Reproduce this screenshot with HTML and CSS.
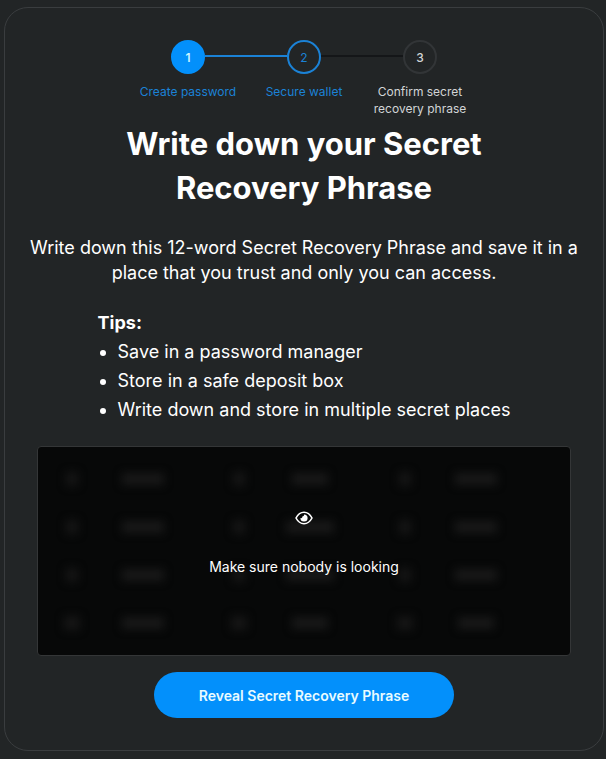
FILE: index.html
```html
<!DOCTYPE html>
<html lang="en">
<head>
    <meta charset="UTF-8">
    <meta name="viewport" content="width=device-width, initial-scale=1.0">
    <title>Secret Recovery Phrase</title>
    <link rel="stylesheet" href="styles.css">
</head>
<body>
    <main class="card">
        <ol class="steps">
            <li class="step done">
                <span class="step-number">1</span>
                <span class="step-label">Create password</span>
            </li>
            <li class="step active">
                <span class="step-number">2</span>
                <span class="step-label">Secure wallet</span>
            </li>
            <li class="step">
                <span class="step-number">3</span>
                <span class="step-label">Confirm secret recovery phrase</span>
            </li>
        </ol>

        <h1>Write down your Secret Recovery Phrase</h1>
        <p class="intro">Write down this 12-word Secret Recovery Phrase and save it in a place that you trust and only you can access.</p>

        <section class="tips">
            <h2>Tips:</h2>
            <ul>
                <li>Save in a password manager</li>
                <li>Store in a safe deposit box</li>
                <li>Write down and store in multiple secret places</li>
            </ul>
        </section>

        <div class="phrase">
            <div class="words" aria-hidden="true">
                <div class="word"><span></span><i></i></div>
                <div class="word"><span></span><i class="short"></i></div>
                <div class="word"><span></span><i></i></div>
                <div class="word"><span></span><i></i></div>
                <div class="word"><span></span><i class="long"></i></div>
                <div class="word"><span></span><i></i></div>
                <div class="word"><span></span><i></i></div>
                <div class="word"><span></span><i class="long"></i></div>
                <div class="word"><span></span><i></i></div>
                <div class="word"><span class="wide"></span><i></i></div>
                <div class="word"><span class="wide"></span><i class="short"></i></div>
                <div class="word"><span class="wide"></span><i class="short"></i></div>
            </div>
            <div class="cover">
                <svg width="18" height="14" viewBox="0 0 18 14" aria-hidden="true">
                    <path d="M1 7C3 3.200 5.700 1.300 9 1.300S15 3.200 17 7C15 10.800 12.300 12.700 9 12.700S3 10.800 1 7Z" fill="none" stroke="#fff" stroke-width="1.600" stroke-linejoin="round"/>
                    <path d="M9 3.400A3.600 3.600 0 1 1 5.400 7A1.500 1.500 0 0 0 7.500 5.300A1.600 1.600 0 0 0 9 3.400Z" fill="#fff"/>
                </svg>
                <p>Make sure nobody is looking</p>
            </div>
        </div>

        <button type="button" class="reveal">Reveal Secret Recovery Phrase</button>
    </main>
</body>
</html>
```
FILE: styles.css
```css
:root {
    --background-color: #222526;
    --primary-color: #0390fb;
    --active-color: #1b82d6;
    --border-color: #3a3d3f;
    --muted-color: #d2d5d7;
}

* {
    margin: 0;
    padding: 0;
    box-sizing: border-box;
}

body {
    font-family: "Inter", sans-serif;
    background-color: var(--background-color);
    color: white;
    padding: 7px 2px 8px 4px;
}

.card {
    display: flex;
    flex-direction: column;
    align-items: center;
    padding: 32px;
    border: 1px solid var(--border-color);
    border-radius: 24px;
}

.steps {
    display: grid;
    grid-template-columns: repeat(3, 116px);
    list-style: none;
    margin-bottom: 5px;
}

.step {
    display: flex;
    flex-direction: column;
    align-items: center;
    gap: 9px;
    position: relative;
    font-size: 12px;
    line-height: 17px;
    color: var(--muted-color);
    text-align: center;
}

/* line to the next step */
.step:not(:last-child)::after {
    content: "";
    position: absolute;
    top: 15px;
    left: calc(50% + 17px);
    width: calc(100% - 34px);
    height: 2px;
    background-color: #141618;
}

.step.done::after {
    background-color: var(--active-color);
}

.step-number {
    display: flex;
    justify-content: center;
    align-items: center;
    width: 34px;
    height: 34px;
    border: 2px solid #323537;
    border-radius: 50%;
    font-weight: 500;
}

.step-label {
    max-width: 100px;
}

.done,
.active {
    color: var(--active-color);
}

.active .step-number {
    border-color: var(--active-color);
    font-weight: 400;
}

.done .step-number {
    background-color: var(--primary-color);
    border-color: var(--primary-color);
    color: #c9f5ff;
    font-weight: 600;
}

h1 {
    max-width: 400px;
    font-size: 31px;
    line-height: 44px;
    font-weight: 700;
    text-align: center;
    margin-bottom: 25px;
}

.intro {
    font-size: 18px;
    line-height: 25px;
    text-align: center;
    margin: 0 -12px 25px;
}

.tips {
    font-size: 18px;
    line-height: 25px;
    margin-bottom: 24px;
}

.tips h2 {
    font-size: 18px;
    font-weight: 700;
}

.tips ul {
    padding-left: 20px;
}

.tips li {
    margin-top: 4px;
}

.phrase {
    display: grid;
    width: 100%;
    background-color: #070808;
    border: 1px solid #343637;
    border-radius: 4px;
    margin-bottom: 16px;
    overflow: hidden;
}

/* the cover shares one grid cell with the words */
.words,
.cover {
    grid-area: 1 / 1;
}

.words {
    display: grid;
    grid-template-columns: repeat(3, 1fr);
    padding: 8px 16px;
}

.word {
    display: grid;
    grid-template-columns: 36px 106px;
    align-items: center;
    justify-items: center;
    height: 48px;
    filter: blur(4px);
}

.word span {
    width: 12px;
    height: 14px;
    background-color: #151515;
}

.word .wide {
    width: 16px;
}

.word i {
    width: 42px;
    height: 12px;
    background-color: #181818;
}

.word .short {
    width: 36px;
}

.word .long {
    width: 48px;
}

.cover {
    display: flex;
    flex-direction: column;
    justify-content: center;
    align-items: center;
    gap: 32px;
    padding-bottom: 14px;
    font-size: 14px;
    line-height: 20px;
    z-index: 1;
}

.reveal {
    width: 300px;
    max-width: 100%;
    height: 46px;
    background-color: var(--primary-color);
    color: #e9fbff;
    border: none;
    border-radius: 23px;
    font-family: inherit;
    font-size: 14px;
    font-weight: 600;
    cursor: pointer;
}
```
